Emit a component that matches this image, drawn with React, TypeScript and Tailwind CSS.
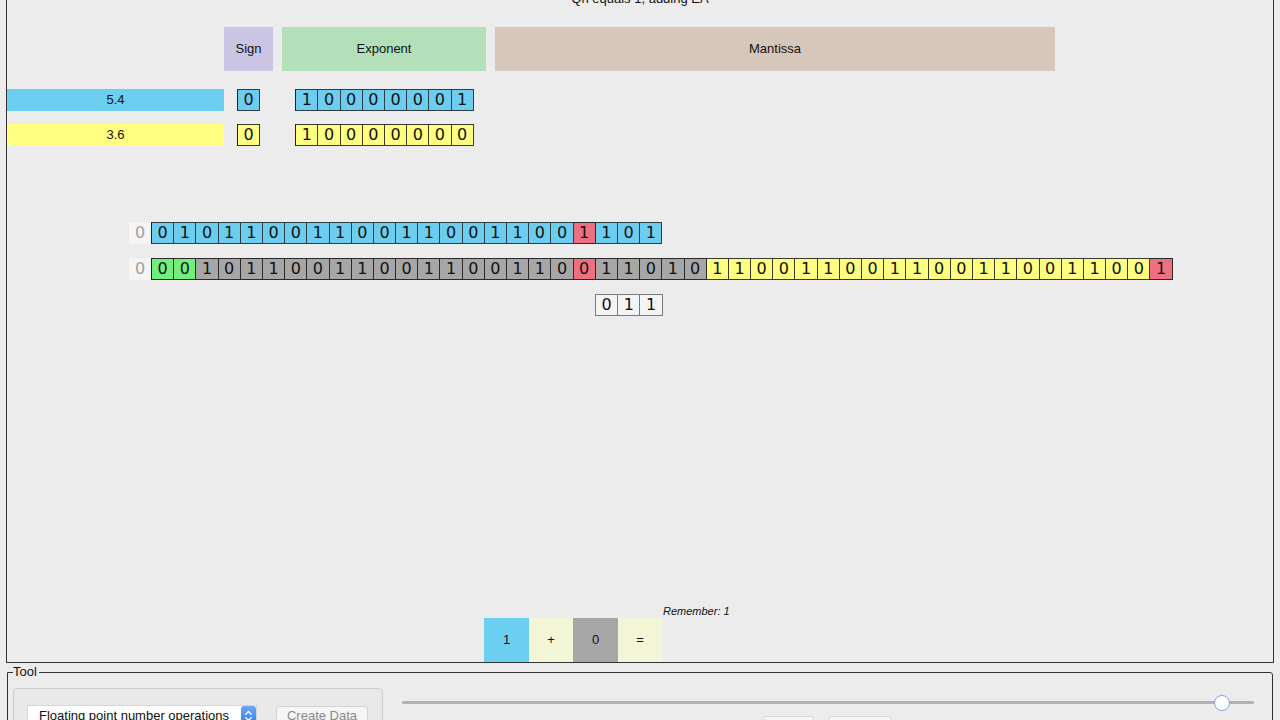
import React from 'react';

type Tone = 'blue' | 'yellow' | 'gray' | 'green' | 'red' | 'white';

const toneClass: Record<Tone, string> = {
  blue: 'bg-[#6ccdef] border-[#2c3e46]',
  yellow: 'bg-[#fefe80] border-[#3a3a2a]',
  gray: 'bg-[#a6a6a6] border-[#2a2a2a]',
  green: 'bg-[#70f07a] border-[#2a2a2a]',
  red: 'bg-[#ee6f80] border-[#2a2a2a]',
  white: 'bg-[#f4f4f4] border-[#7a7a7a]',
};

type Bit = { v: string; t: Tone };

function bits(str: string, tone: Tone): Bit[] {
  return str.split('').map((v) => ({ v, t: tone }));
}

function BitRow({ cells, className = '' }: { cells: Bit[]; className?: string }) {
  const edge = cells[0].t === 'white' ? 'border-[#7a7a7a]' : 'border-[#222]';
  return (
    <div className={`flex border-l ${edge} ${className}`}>
      {cells.map((c, i) => (
        <div
          key={i}
          className={`w-[22.2px] h-[22px] border-r border-y flex items-center justify-center text-[16px] leading-none text-[#111] font-['DejaVu_Sans',sans-serif] ${toneClass[c.t]}`}
        >
          {c.v}
        </div>
      ))}
    </div>
  );
}

function Prefix() {
  return (
    <div className="w-[22px] h-[22px] bg-[#f5f5f5] text-[#a0a0a0] flex items-center justify-center text-[16px] font-['DejaVu_Sans',sans-serif]">
      0
    </div>
  );
}

const row1: Bit[] = [
  ...bits('0101100110011001100', 'blue'),
  { v: '1', t: 'red' },
  ...bits('101', 'blue'),
];

const row2: Bit[] = [
  ...bits('00', 'green'),
  ...bits('10110011001100110', 'gray'),
  { v: '0', t: 'red' },
  ...bits('11010', 'gray'),
  ...bits('11001100110011001100', 'yellow'),
  { v: '1', t: 'red' },
];

export default function App() {
  return (
    <div className="w-[1280px] h-[720px] overflow-hidden bg-[#ececec] text-[#111] font-['Liberation_Sans',Arial,sans-serif]">
      {/* drawing area */}
      <div className="ml-[6px] w-[1268px] h-[663px] border-x border-b border-[#333] flex flex-col">
        <div className="-mt-[9px] h-[16px] text-center text-[13px] leading-[16px]">Qn equals 1, adding EA</div>

        <div className="mt-[20px] ml-[217px] flex gap-[9px] h-[44px] text-[13px]">
          <div className="w-[49px] bg-[#cac5e5] flex items-center justify-center">Sign</div>
          <div className="w-[204px] bg-[#b3e0b9] flex items-center justify-center">Exponent</div>
          <div className="w-[560px] bg-[#d7c6ba] flex items-center justify-center">Mantissa</div>
        </div>

        <div className="mt-[18px] flex h-[22px]">
          <div className="w-[217px] bg-[#6dcff0] flex items-center justify-center text-[13px]">5.4</div>
          <BitRow className="ml-[13px]" cells={bits('0', 'blue')} />
          <BitRow className="ml-[35px]" cells={bits('10000001', 'blue')} />
        </div>

        <div className="mt-[13px] flex h-[22px]">
          <div className="w-[217px] bg-[#ffff80] flex items-center justify-center text-[13px]">3.6</div>
          <BitRow className="ml-[13px]" cells={bits('0', 'yellow')} />
          <BitRow className="ml-[35px]" cells={bits('10000000', 'yellow')} />
        </div>

        <div className="mt-[76px] ml-[122px] flex">
          <Prefix />
          <BitRow cells={row1} />
        </div>

        <div className="mt-[14px] ml-[122px] flex">
          <Prefix />
          <BitRow cells={row2} />
        </div>

        <div className="mt-[14px] ml-[588px] flex">
          <BitRow cells={bits('011', 'white')} />
        </div>

        <div className="mt-auto ml-[477px] flex h-[57px]">
          <div className="mt-[13px] flex h-[44px] text-[13px]">
            <div className="w-[45px] bg-[#6ccff0] flex items-center justify-center">1</div>
            <div className="w-[44px] bg-[#f3f5d7] flex items-center justify-center">+</div>
            <div className="w-[45px] bg-[#a6a6a6] flex items-center justify-center">0</div>
            <div className="w-[44px] bg-[#f3f5d7] flex items-center justify-center">=</div>
          </div>
          <div className="ml-[1px] text-[11px] leading-[13px] italic">Remember: 1</div>
        </div>
      </div>

      {/* tool group */}
      <fieldset className="mt-[1px] ml-[7px] w-[1266px] h-[80px] border border-[#333] rounded-tr-[3px] pl-[5px]">
        <legend className="text-[13px] leading-[16px] pr-[2px]">Tool</legend>
        <div className="flex">
          <div className="mt-[8px] w-[370px] h-[60px] border border-[#cdcdcd] rounded-[4px] bg-[#e9e9e9] pt-[17px] pl-[14px] flex items-start">
            <div className="w-[228px] h-[20px] bg-white flex items-center justify-between shadow-[0_0_0_1px_#d6d6d6]">
              <span className="pl-[11px] text-[13px]">Floating point number operations</span>
              <div className="w-[15px] h-[20px] rounded-[3px] bg-gradient-to-b from-[#6aa8f5] to-[#2f7ae6] flex items-center justify-center">
                <svg width="9" height="14" viewBox="0 0 9 14" fill="none" stroke="white" strokeWidth="1.4" strokeLinecap="round" strokeLinejoin="round">
                  <path d="M1.8 5.2 L4.5 2.6 L7.2 5.2" />
                  <path d="M1.8 8.8 L4.5 11.4 L7.2 8.8" />
                </svg>
              </div>
            </div>
            <div className="ml-[20px] w-[92px] h-[20px] bg-[#f5f5f5] border border-[#d3d3d3] rounded-[3px] flex items-center justify-center text-[13px] text-[#8a8a8a]">
              Create Data
            </div>
          </div>

          <div className="ml-[19px] w-[852px]">
            <div className="relative mt-[15px] h-[16px]">
              <div className="absolute left-0 right-0 top-[6px] h-[3px] rounded-full bg-[#b2b2b2]" />
              <div className="absolute left-[812px] top-0 w-[16px] h-[16px] rounded-full bg-white border border-[#7ba6dd]" />
            </div>
            <div className="mt-[5px] ml-[361px] flex gap-[14px]">
              <div className="w-[51px] h-[20px] bg-[#f6f6f6] border border-[#d6d6d6] rounded-[3px]" />
              <div className="w-[64px] h-[20px] bg-[#f6f6f6] border border-[#d6d6d6] rounded-[3px]" />
            </div>
          </div>
        </div>
      </fieldset>
    </div>
  );
}
